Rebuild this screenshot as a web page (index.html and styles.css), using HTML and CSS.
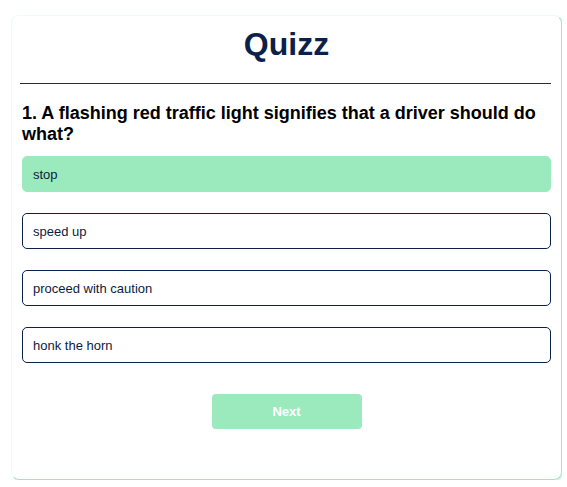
FILE: index.html
```html
<!DOCTYPE html>
<html>
<head>
<meta charset="utf-8">
<link rel="stylesheet" href="styles.css">
</head>
<body>
<div class="card">
  <h1 class="title">Quizz</h1>
  <div class="rule"></div>
  <h2 class="question">1. A flashing red traffic light signifies that a driver should do what?</h2>
  <div class="options">
    <button class="option selected">stop</button>
    <button class="option">speed up</button>
    <button class="option">proceed with caution</button>
    <button class="option">honk the horn</button>
  </div>
  <div class="actions">
    <button class="next">Next</button>
  </div>
</div>
</body>
</html>
```
FILE: styles.css
```css
html, body {
  background: #ffffff;
}
body {
  margin: 15px 5px 0 11px;
  font-family: "Liberation Sans", Arial, sans-serif;
}
.card {
  box-sizing: border-box;
  width: 551px;
  height: 465px;
  border: 1px solid #eefbf3;
  border-right-color: #9beabd;
  border-bottom-color: #9beabd;
  border-radius: 8px;
  box-shadow: 1px 1px 1px #c8f3db;
  padding: 10px 10px 0 10px;
}
.title {
  margin: 0;
  text-align: center;
  font-size: 32px;
  line-height: 37px;
  font-weight: bold;
  color: #0b2149;
}
.rule {
  margin: 20px 0 0 -2px;
  border-top: 1px solid #2b2b2b;
}
.question {
  margin: 19px 0 0 0;
  font-size: 18px;
  line-height: 21px;
  font-weight: bold;
  color: #000;
}
.options {
  margin-top: 11px;
  display: flex;
  flex-direction: column;
  gap: 21px;
}
.option {
  box-sizing: border-box;
  height: 36px;
  width: 100%;
  text-align: left;
  padding: 0 10px;
  font-family: "Liberation Sans", Arial, sans-serif;
  font-size: 13px;
  color: #0d1b3e;
  background: #fff;
  border: 1px solid #0b2149;
  border-radius: 5px;
}
.option.selected {
  background: #9beabd;
  border-color: #9beabd;
}
.actions {
  margin-top: 31px;
  display: flex;
  justify-content: center;
}
.next {
  width: 150px;
  height: 35px;
  border: none;
  border-radius: 4px;
  background: #9beabd;
  color: #ffffff;
  font-family: "Liberation Sans", Arial, sans-serif;
  font-size: 13px;
  font-weight: bold;
}
```
